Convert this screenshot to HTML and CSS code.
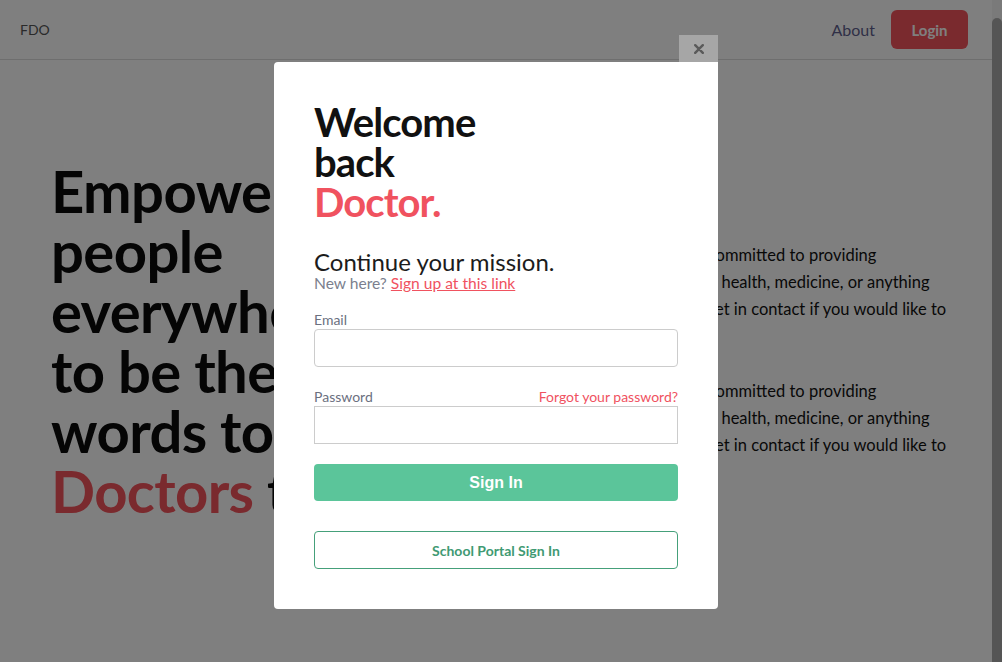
FILE: index.html
```html
<!DOCTYPE html>
<html lang="en">
<head>
<meta charset="utf-8">
<title>FDO – Sign in</title>
<link rel="stylesheet" href="styles.css">
</head>
<body>
<div class="app">
  <div class="page">
    <header class="topbar">
      <div class="brand">FDO</div>
      <nav class="nav">
        <a class="nav-link" href="#">About</a>
        <a class="login-btn" href="#">Login</a>
      </nav>
    </header>
    <main class="hero">
      <h1 class="hero-title">Empowering people everywhere to be the words to <span class="hero-accent">Doctors</span> too.</h1>
      <div class="about">
        <p>We are a group of people committed to providing interpretation support with health, medicine, or anything else you'd require. Please get in contact if you would like to volunteer.</p>
        <p>We are a group of people committed to providing interpretation support with health, medicine, or anything else you'd require. Please get in contact if you would like to volunteer.</p>
      </div>
    </main>
  </div>
  <div class="scrollbar"><div class="scrollbar-thumb"></div></div>
</div>

<div class="overlay">
  <div class="dialog">
    <button class="close-btn" aria-label="Close">
      <svg width="10" height="10" viewBox="0 0 10 10"><path d="M1.2 1.2 L8.8 8.8 M8.8 1.2 L1.2 8.8" stroke="#5a5a5a" stroke-width="2.4" stroke-linecap="round"/></svg>
    </button>
    <div class="modal">
      <h2 class="modal-title"><span>Welcome</span><span>back</span><span class="accent">Doctor.</span></h2>
      <p class="subtitle">Continue your mission.</p>
      <p class="signup">New here? <a href="#">Sign up at this link</a></p>
      <div class="field first">
        <div class="label-row"><label for="email">Email</label></div>
        <input id="email" class="input" type="email">
      </div>
      <div class="field">
        <div class="label-row"><label for="pw">Password</label><a class="forgot" href="#">Forgot your password?</a></div>
        <input id="pw" class="input square" type="password">
      </div>
      <button class="btn-primary">Sign In</button>
      <button class="btn-outline">School Portal Sign In</button>
    </div>
  </div>
</div>
</body>
</html>
```

FILE: styles.css
```css
* { box-sizing: border-box; }
html, body { margin: 0; height: 100%; }
body {
  font-family: Lato, "Open Sans", sans-serif;
  background: #fff;
  color: #111;
  overflow: hidden;
}
.app { display: flex; height: 100vh; }
.page { flex: 1; min-width: 0; }

.scrollbar {
  width: 10px;
  background: #f4f4f4;
  padding-top: 18px;
  display: flex;
}
.scrollbar-thumb {
  flex: 1;
  background: #ababab;
  border-radius: 5px 5px 0 0;
}

.topbar {
  height: 60px;
  border-bottom: 1px solid #dcdcdc;
  display: flex;
  align-items: center;
  justify-content: space-between;
  padding: 0 24px 0 20px;
}
.brand { font-size: 14px; color: #555; }
.nav { display: flex; align-items: center; gap: 16px; }
.nav-link { font-size: 16px; color: #5f5f8e; text-decoration: none; }
.login-btn {
  width: 77px;
  height: 39px;
  border-radius: 6px;
  background: #f5545c;
  color: #fff;
  font-weight: 700;
  font-size: 15px;
  text-decoration: none;
  display: flex;
  align-items: center;
  justify-content: center;
}

.hero {
  display: grid;
  grid-template-columns: 348px 433px;
  column-gap: 122px;
  padding: 101px 38px 0 51px;
}
.hero-title {
  margin: 0;
  font-size: 58px;
  line-height: 60px;
  font-weight: 700;
  letter-spacing: -0.6px;
  color: #0a0a0a;
}
.hero-accent { color: #f5545c; }
.about { padding-top: 81px; }
.about p {
  margin: 0 0 28px;
  font-size: 16.5px;
  line-height: 27px;
  color: #111;
}

.overlay {
  position: fixed;
  inset: 0;
  background: rgba(0, 0, 0, 0.5);
  display: flex;
  justify-content: center;
  align-items: flex-start;
  padding: 35px 10px 0 0;
}
.dialog { width: 444px; display: flex; flex-direction: column; }
.close-btn {
  align-self: flex-end;
  width: 39px;
  height: 27px;
  border: 0;
  padding: 0;
  background: #a6a6a6;
  display: flex;
  align-items: center;
  justify-content: center;
}
.modal {
  background: #fff;
  border-radius: 4px 0 4px 4px;
  padding: 40px;
}
.modal-title {
  margin: 0;
  font-size: 40px;
  line-height: 40px;
  font-weight: 700;
  letter-spacing: -0.9px;
  color: #111;
}
.modal-title span { display: block; }
.modal-title .accent { color: #f0525f; }
.subtitle {
  margin: 28px 0 0;
  font-size: 24px;
  line-height: 24px;
  color: #1c1c1c;
}
.signup {
  margin: 0;
  font-size: 15.6px;
  line-height: 18px;
  color: #7b7f8e;
}
.signup a { color: #f0525f; }
.field { margin-top: 21px; }
.field.first { margin-top: 19px; }
.label-row {
  display: flex;
  justify-content: space-between;
  align-items: baseline;
  font-size: 14px;
  line-height: 17px;
  margin-bottom: 1px;
  color: #6b7080;
}
.forgot { color: #f0525f; text-decoration: none; }
.input {
  display: block;
  width: 100%;
  height: 38px;
  border: 1px solid #cccccc;
  border-radius: 4px;
  background: #fff;
  font: inherit;
}
.input.square { border-radius: 0; }
.btn-primary {
  display: block;
  width: 100%;
  height: 37px;
  margin-top: 20px;
  border: 0;
  border-radius: 4px;
  background: #5bc59a;
  color: #fff;
  font-family: "Liberation Sans", Arial, sans-serif;
  font-weight: 700;
  font-size: 16px;
}
.btn-outline {
  display: block;
  width: 100%;
  height: 38px;
  margin-top: 30px;
  border: 1px solid #45a07a;
  border-radius: 4px;
  background: #fff;
  color: #3f9a73;
  font-family: Lato, sans-serif;
  font-weight: 700;
  font-size: 14px;
}
```
